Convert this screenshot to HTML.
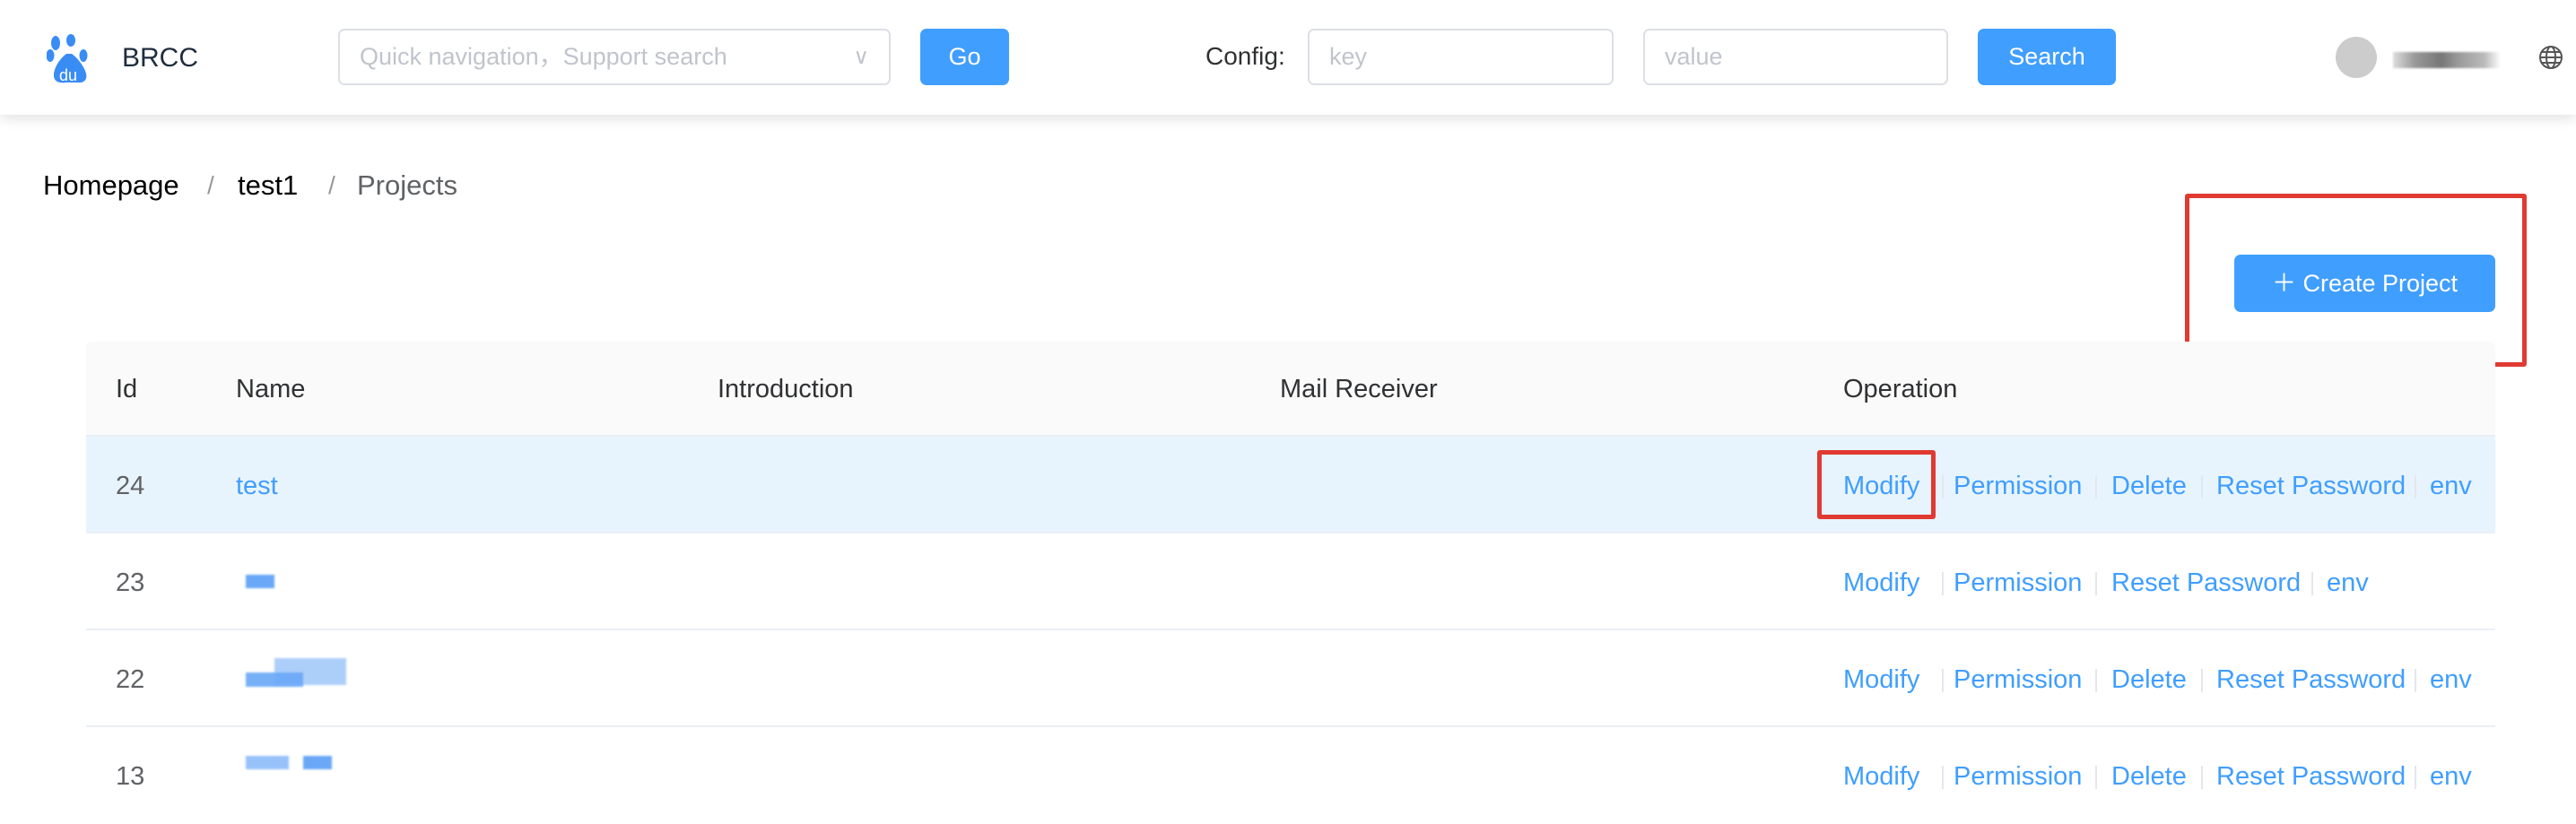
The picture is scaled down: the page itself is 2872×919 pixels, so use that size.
<!DOCTYPE html>
<html><head><meta charset="utf-8"><style>
*{margin:0;padding:0;box-sizing:border-box}
body{width:2872px;height:914px;overflow:hidden;background:#fff;font-family:"Liberation Sans",sans-serif;position:relative;color:#303133}
.a{position:absolute;white-space:nowrap}
.hdr{position:absolute;left:0;top:0;width:2872px;height:128px;background:#fff;box-shadow:0 4px 14px rgba(0,0,0,.12)}
.inp{position:absolute;top:32px;height:63px;border:2px solid #dcdfe6;border-radius:7px;background:#fff;color:#c0c4cc;font-size:27px;line-height:59px;padding-left:22px}
.btn{position:absolute;background:#409eff;color:#fff;border-radius:7px;text-align:center;font-size:27px}
.lk{position:absolute;color:#409eff;font-size:29px;white-space:nowrap}
.sep{position:absolute;width:2px;height:26px;background:#e4e7ed}
.row{position:absolute;left:96px;width:2686px;height:108px;border-bottom:2px solid #ebeef5}
.th{position:absolute;top:418px;font-size:29px;color:#303133}
.id{position:absolute;left:129px;font-size:29px;color:#606266}
.blur{position:absolute;background:#6aa8f7;filter:blur(1px)}
</style></head><body>
<div class="hdr"></div>
<svg class="a" style="left:52px;top:38px" width="54" height="56" viewBox="0 0 54 56">
<g fill="#3a8cf5"><ellipse cx="10" cy="10" rx="5" ry="8"/><ellipse cx="27" cy="7" rx="5" ry="7"/><ellipse cx="4" cy="24" rx="4.5" ry="7"/><ellipse cx="41" cy="24" rx="4.5" ry="7"/>
<path d="M22 22 C14 28 8 38 8 46 C8 54 16 55 22 54 L34 54 C40 55 46 52 44 44 C42 36 34 26 28 22 Z"/></g>
<text x="14" y="52" font-size="18" fill="#fff" font-family="Liberation Sans">du</text></svg>
<div class="a" style="left:136px;top:48px;font-size:30px;color:#1f2d3d">BRCC</div>
<div class="inp" style="left:377px;width:616px">Quick navigation，Support search<span style="position:absolute;right:22px;top:0;font-size:24px">∨</span></div>
<div class="btn" style="left:1026px;top:32px;width:99px;height:63px;line-height:63px">Go</div>
<div class="a" style="left:1344px;top:47px;font-size:28px;color:#303133">Config:</div>
<div class="inp" style="left:1458px;width:341px">key</div>
<div class="inp" style="left:1832px;width:340px">value</div>
<div class="btn" style="left:2205px;top:32px;width:154px;height:63px;line-height:63px">Search</div>
<div class="a" style="left:2604px;top:41px;width:46px;height:46px;border-radius:50%;background:#ccc"></div>
<div class="a" style="left:2668px;top:58px;width:120px;height:18px;background:linear-gradient(90deg,#ddd,#999 20%,#777 45%,#999 60%,#bbb 85%,#fff);filter:blur(1px)"></div>
<svg class="a" style="left:2830px;top:50px" width="28" height="28" viewBox="0 0 28 28" fill="none" stroke="#555" stroke-width="2"><circle cx="14" cy="14" r="12"/><ellipse cx="14" cy="14" rx="5" ry="12"/><path d="M2 14h24M4 8h20M4 20h20"/></svg>

<div class="a" style="left:48px;top:189px;font-size:31px;color:#000">Homepage</div>
<div class="a" style="left:231px;top:191px;font-size:28px;color:#999">/</div>
<div class="a" style="left:265px;top:189px;font-size:31px;color:#000">test1</div>
<div class="a" style="left:366px;top:191px;font-size:28px;color:#999">/</div>
<div class="a" style="left:398px;top:189px;font-size:31px;color:#606266">Projects</div>

<div class="btn" style="left:2491px;top:284px;width:291px;height:64px;line-height:64px">＋ Create Project</div>
<div class="a" style="left:2436px;top:216px;width:381px;height:193px;border:5px solid #e03a32;border-radius:3px"></div>

<div class="a" style="left:96px;top:381px;width:2686px;height:106px;background:#fafafa;border-bottom:2px solid #ebeef5;border-radius:6px 6px 0 0"></div>
<div class="th" style="left:129px">Id</div>
<div class="th" style="left:263px">Name</div>
<div class="th" style="left:800px">Introduction</div>
<div class="th" style="left:1427px">Mail Receiver</div>
<div class="th" style="left:2055px">Operation</div>

<div class="row" style="top:487px;background:#e8f4fd"></div>
<div class="row" style="top:595px"></div>
<div class="row" style="top:703px"></div>
<div class="row" style="top:811px;border:none"></div>

<div class="id" style="top:526px">24</div>
<div class="lk" style="left:263px;top:526px">test</div>
<div class="id" style="top:634px">23</div>
<div class="blur" style="left:274px;top:641px;width:32px;height:15px"></div>
<div class="id" style="top:742px">22</div>
<div class="blur" style="left:274px;top:750px;width:64px;height:16px;opacity:.9"></div>
<div class="blur" style="left:306px;top:734px;width:80px;height:30px;opacity:.55"></div>
<div class="id" style="top:850px">13</div>
<div class="blur" style="left:274px;top:843px;width:48px;height:15px;opacity:.7"></div>
<div class="blur" style="left:338px;top:843px;width:32px;height:15px"></div>

<div class="lk" style="left:2055px;top:526px">Modify</div><div class="sep" style="left:2165px;top:530px"></div>
<div class="lk" style="left:2178px;top:526px">Permission</div><div class="sep" style="left:2336px;top:530px"></div>
<div class="lk" style="left:2354px;top:526px">Delete</div><div class="sep" style="left:2454px;top:530px"></div>
<div class="lk" style="left:2471px;top:526px">Reset Password</div><div class="sep" style="left:2692px;top:530px"></div>
<div class="lk" style="left:2709px;top:526px">env</div>

<div class="lk" style="left:2055px;top:634px">Modify</div><div class="sep" style="left:2165px;top:638px"></div>
<div class="lk" style="left:2178px;top:634px">Permission</div><div class="sep" style="left:2336px;top:638px"></div>
<div class="lk" style="left:2354px;top:634px">Reset Password</div><div class="sep" style="left:2577px;top:638px"></div>
<div class="lk" style="left:2594px;top:634px">env</div>

<div class="lk" style="left:2055px;top:742px">Modify</div><div class="sep" style="left:2165px;top:746px"></div>
<div class="lk" style="left:2178px;top:742px">Permission</div><div class="sep" style="left:2336px;top:746px"></div>
<div class="lk" style="left:2354px;top:742px">Delete</div><div class="sep" style="left:2454px;top:746px"></div>
<div class="lk" style="left:2471px;top:742px">Reset Password</div><div class="sep" style="left:2692px;top:746px"></div>
<div class="lk" style="left:2709px;top:742px">env</div>

<div class="lk" style="left:2055px;top:850px">Modify</div><div class="sep" style="left:2165px;top:854px"></div>
<div class="lk" style="left:2178px;top:850px">Permission</div><div class="sep" style="left:2336px;top:854px"></div>
<div class="lk" style="left:2354px;top:850px">Delete</div><div class="sep" style="left:2454px;top:854px"></div>
<div class="lk" style="left:2471px;top:850px">Reset Password</div><div class="sep" style="left:2692px;top:854px"></div>
<div class="lk" style="left:2709px;top:850px">env</div>

<div class="a" style="left:2026px;top:502px;width:132px;height:77px;border:5px solid #e03a32;border-radius:3px"></div>
</body></html>
